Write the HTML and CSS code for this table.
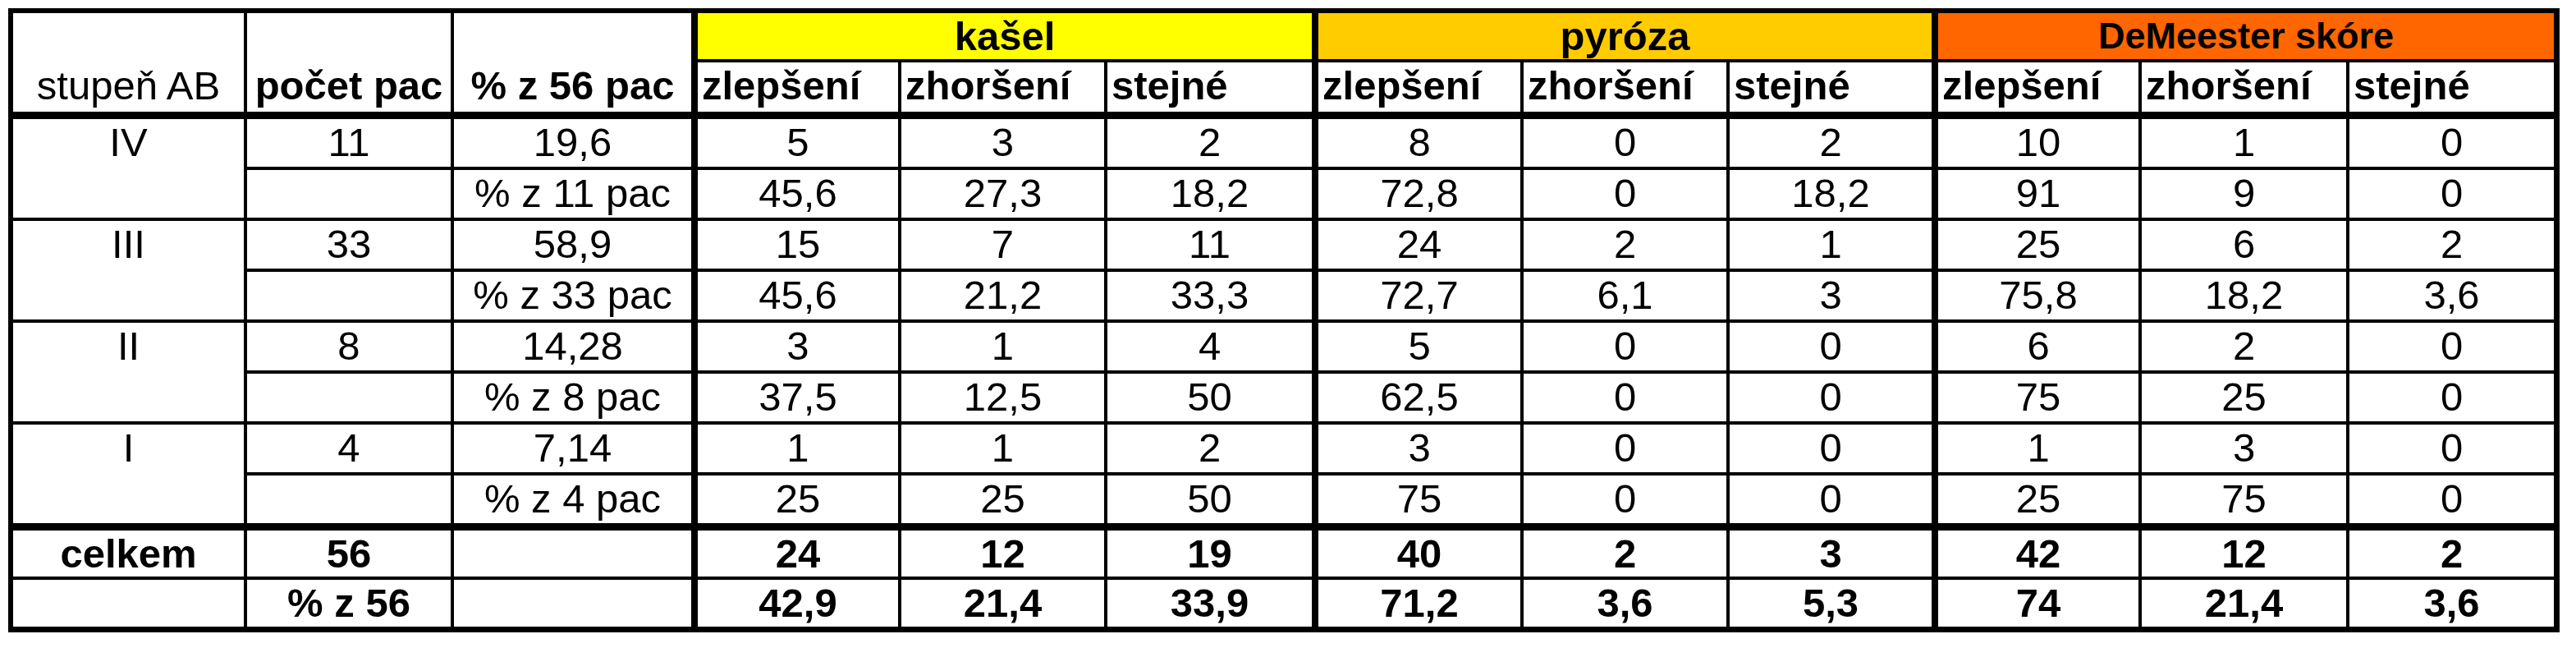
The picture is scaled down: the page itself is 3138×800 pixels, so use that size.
FILE: index.html
```html
<!DOCTYPE html>
<html lang="cs">
<head>
<meta charset="utf-8">
<title>Tabulka</title>
<link rel="stylesheet" href="styles.css">
</head>
<body>
<div class="wrap">
<table class="grid">
  <colgroup>
    <col class="c-a"><col class="c-b"><col class="c-c">
    <col class="c-d1"><col class="c-d2"><col class="c-d3">
    <col class="c-e1"><col class="c-e2"><col class="c-e3">
    <col class="c-f1"><col class="c-f2"><col class="c-f3">
  </colgroup>
  <tr class="h1">
    <td rowspan="2" class="span-h tb">stupeň AB</td>
    <td rowspan="2" class="span-h tb b">počet pac</td>
    <td rowspan="2" class="span-h tb b r8">% z 56 pac</td>
    <td colspan="3" class="grp kasel r8">kašel</td>
    <td colspan="3" class="grp pyroza r8">pyróza</td>
    <td colspan="3" class="grp demeester r0">DeMeester skóre</td>
  </tr>
  <tr class="h2">
    <td class="lbl tb">zlepšení</td><td class="lbl tb">zhoršení</td><td class="lbl tb r8">stejné</td>
    <td class="lbl tb">zlepšení</td><td class="lbl tb">zhoršení</td><td class="lbl tb r8">stejné</td>
    <td class="lbl tb">zlepšení</td><td class="lbl tb">zhoršení</td><td class="lbl tb r0">stejné</td>
  </tr>

  <tr class="row">
    <td rowspan="2">IV</td><td>11</td><td class="r8">19,6</td>
    <td>5</td><td>3</td><td class="r8">2</td>
    <td>8</td><td>0</td><td class="r8">2</td>
    <td>10</td><td>1</td><td class="r0">0</td>
  </tr>
  <tr class="row">
    <td></td><td class="r8">% z 11 pac</td>
    <td>45,6</td><td>27,3</td><td class="r8">18,2</td>
    <td>72,8</td><td>0</td><td class="r8">18,2</td>
    <td>91</td><td>9</td><td class="r0">0</td>
  </tr>

  <tr class="row">
    <td rowspan="2">III</td><td>33</td><td class="r8">58,9</td>
    <td>15</td><td>7</td><td class="r8">11</td>
    <td>24</td><td>2</td><td class="r8">1</td>
    <td>25</td><td>6</td><td class="r0">2</td>
  </tr>
  <tr class="row">
    <td></td><td class="r8">% z 33 pac</td>
    <td>45,6</td><td>21,2</td><td class="r8">33,3</td>
    <td>72,7</td><td>6,1</td><td class="r8">3</td>
    <td>75,8</td><td>18,2</td><td class="r0">3,6</td>
  </tr>

  <tr class="row">
    <td rowspan="2">II</td><td>8</td><td class="r8">14,28</td>
    <td>3</td><td>1</td><td class="r8">4</td>
    <td>5</td><td>0</td><td class="r8">0</td>
    <td>6</td><td>2</td><td class="r0">0</td>
  </tr>
  <tr class="row">
    <td></td><td class="r8">% z 8 pac</td>
    <td>37,5</td><td>12,5</td><td class="r8">50</td>
    <td>62,5</td><td>0</td><td class="r8">0</td>
    <td>75</td><td>25</td><td class="r0">0</td>
  </tr>

  <tr class="row">
    <td rowspan="2" class="tb">I</td><td>4</td><td class="r8">7,14</td>
    <td>1</td><td>1</td><td class="r8">2</td>
    <td>3</td><td>0</td><td class="r8">0</td>
    <td>1</td><td>3</td><td class="r0">0</td>
  </tr>
  <tr class="row last-grp">
    <td class="tb"></td><td class="tb r8">% z 4 pac</td>
    <td class="tb">25</td><td class="tb">25</td><td class="tb r8">50</td>
    <td class="tb">75</td><td class="tb">0</td><td class="tb r8">0</td>
    <td class="tb">25</td><td class="tb">75</td><td class="tb r0">0</td>
  </tr>

  <tr class="total">
    <td>celkem</td><td>56</td><td class="r8"></td>
    <td>24</td><td>12</td><td class="r8">19</td>
    <td>40</td><td>2</td><td class="r8">3</td>
    <td>42</td><td>12</td><td class="r0">2</td>
  </tr>
  <tr class="total final">
    <td></td><td>% z 56</td><td class="r8"></td>
    <td>42,9</td><td>21,4</td><td class="r8">33,9</td>
    <td>71,2</td><td>3,6</td><td class="r8">5,3</td>
    <td>74</td><td>21,4</td><td class="r0">3,6</td>
  </tr>
</table>
</div>
</body>
</html>
```
FILE: styles.css
```css
html, body {
  margin: 0;
  padding: 0;
  background: #ffffff;
}

.wrap {
  padding: 10px 0 0 10px;
}

.grid {
  table-layout: fixed;
  border-collapse: separate;
  border-spacing: 0;
  box-sizing: border-box;
  width: 3108px;
  border-style: solid;
  border-color: #000;
  border-width: 6px 7px 7px 6px;
  font-family: "Liberation Sans", Arial, sans-serif;
  font-size: 49px;
  line-height: 56px;
  color: #000;
}

.c-a { width: 285px; }
.c-b { width: 252px; }
.c-c { width: 297px; }
.c-d1 { width: 248px; }
.c-d2 { width: 251px; }
.c-d3 { width: 257px; }
.c-e1 { width: 250px; }
.c-e2 { width: 251px; }
.c-e3 { width: 254px; }
.c-f1 { width: 248px; }
.c-f2 { width: 253px; }
.c-f3 { width: 249px; }

.grid td {
  box-sizing: border-box;
  padding: 0;
  border-style: solid;
  border-color: #000;
  border-width: 0 4px 4px 0;
  text-align: center;
  vertical-align: top;
  white-space: nowrap;
  overflow: hidden;
  background: #fff;
}

.grid td.r8 { border-right-width: 8px; }
.grid td.r0 { border-right-width: 0; }
.grid td.tb { border-bottom-width: 9px; }

.b { font-weight: bold; }

.h1 td { height: 60px; }
.h2 td { height: 69px; }
.row td { height: 62px; }
.row.last-grp td { height: 67px; }
.total td { height: 60px; font-weight: bold; }
.total.final td { height: 57px; border-bottom-width: 0; }

.grid td.span-h {
  height: auto;
  vertical-align: bottom;
  padding-bottom: 4px;
}

.grp { font-weight: bold; }
.kasel { background: #ffff00 !important; }
.pyroza { background: #ffcc00 !important; }
.demeester { background: #ff6600 !important; font-size: 45px; }

.grid td.lbl {
  text-align: left;
  padding-left: 5px;
  font-weight: bold;
}
```
